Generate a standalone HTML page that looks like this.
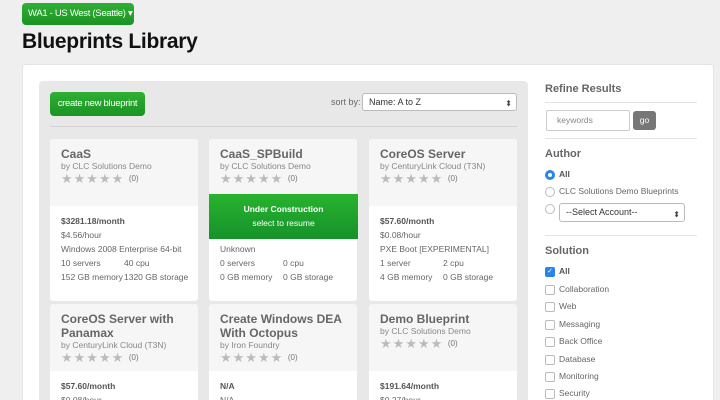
<!DOCTYPE html>
<html style="overflow:hidden;height:400px"><head><meta charset="utf-8"><style>
*{box-sizing:border-box;margin:0;padding:0}
body{width:720px;height:400px;overflow:hidden;background:#efefef;font-family:"Liberation Sans",sans-serif;position:relative;color:#555}
.abs{position:absolute}
.reg{left:22px;top:3px;width:112px;height:22px;background:linear-gradient(#2fb035,#1a9322);border-radius:4px;color:#fff;font-size:9.5px;line-height:22px;padding-left:6px;letter-spacing:-.3px;white-space:nowrap}
h1{position:absolute;left:22px;top:30px;font-size:21px;color:#111;font-weight:bold;letter-spacing:-.3px}
.panel{left:22px;top:64px;width:692px;height:336px;background:#fff;border-radius:4px 4px 0 0;border:1px solid #e4e4e4;border-bottom:none}
.inner{left:39px;top:81px;width:489px;height:319px;background:#e8e8e8;border-radius:4px 4px 0 0}
.btn{left:50px;top:92px;width:95px;height:24px;background:linear-gradient(#2fb035,#1a9322);border-radius:4px;color:#fff;font-size:9.5px;line-height:24px;text-align:center;letter-spacing:-.3px;white-space:nowrap}
.sortl{left:331px;top:97px;font-size:9px;color:#666}
.sel{background:#fff;border:1px solid #bbb;border-radius:3px;font-size:9px;color:#333;padding-left:6px}
.sel:after{content:"⬍";position:absolute;right:4px;top:2px;font-size:8px;color:#444}
.card{background:#fff;border-radius:3px;overflow:hidden}
.card .top{background:#f6f6f6;height:67px;padding:8px 11px}
.t{font-weight:bold;font-size:12px;color:#666;line-height:14px}
.by{font-size:8.5px;color:#888;margin-top:0px}
.st{font-size:13px;color:#bbb;letter-spacing:1px;line-height:16px}
.st span{font-size:8px;color:#777;letter-spacing:0;vertical-align:2px}
.bd{padding:8px 11px;font-size:8.5px;color:#666;line-height:14px;white-space:nowrap}
.bd b{color:#555}
.g{display:inline-block;width:63px}
.h{font-weight:bold;color:#666;font-size:11px}
.rule{height:1px;background:#e3e3e3;width:152px;left:545px}
.chk{width:10px;height:10px;border:1px solid #bbb;border-radius:2px;background:#fff;display:inline-block;vertical-align:middle;margin-right:4px}
.row{left:545px;font-size:8.5px;color:#666}
</style></head><body>
<div class="abs reg">WA1 - US West (Seattle) ▾</div>
<h1>Blueprints Library</h1>
<div class="abs panel"></div>
<div class="abs inner"></div>
<div class="abs btn">create new blueprint</div>
<div class="abs sortl">sort by:</div>
<div class="abs sel" style="left:362px;top:93px;width:155px;height:18px;line-height:16px">Name: A to Z</div>
<div class="abs" style="left:50px;top:126px;width:467px;height:1px;background:#d4d4d4"></div>

<div class="abs card" style="left:50px;top:139px;width:148px;height:162px"><div class="top"><div class="t">CaaS</div><div class="by">by CLC Solutions Demo</div><div class="st">★★★★★ <span>(0)</span></div></div>
<div class="bd"><b>$3281.18/month</b><br>$4.56/hour<br>Windows 2008 Enterprise 64-bit<br><span class="g">10 servers</span>40 cpu<br><span class="g">152 GB memory</span>1320 GB storage</div></div>

<div class="abs card" style="left:209px;top:139px;width:148px;height:162px"><div class="top"><div class="t">CaaS_SPBuild</div><div class="by">by CLC Solutions Demo</div><div class="st">★★★★★ <span>(0)</span></div></div>
<div class="bd" style="padding-top:36px">Unknown<br><span class="g">0 servers</span>0 cpu<br><span class="g">0 GB memory</span>0 GB storage</div></div>
<div class="abs" style="left:209px;top:194px;width:149px;height:45px;background:linear-gradient(#28b32e,#16922a);color:#fff;text-align:center;font-size:8.5px;line-height:14px;padding-top:8px"><b>Under Construction</b><br>select to resume</div>

<div class="abs card" style="left:369px;top:139px;width:148px;height:162px"><div class="top"><div class="t">CoreOS Server</div><div class="by">by CenturyLink Cloud (T3N)</div><div class="st">★★★★★ <span>(0)</span></div></div>
<div class="bd"><b>$57.60/month</b><br>$0.08/hour<br>PXE Boot [EXPERIMENTAL]<br><span class="g">1 server</span>2 cpu<br><span class="g">4 GB memory</span>0 GB storage</div></div>

<div class="abs card" style="left:50px;top:304px;width:148px;height:96px;border-radius:3px 3px 0 0"><div class="top"><div class="t">CoreOS Server with<br>Panamax</div><div class="by">by CenturyLink Cloud (T3N)</div><div class="st">★★★★★ <span>(0)</span></div></div>
<div class="bd"><b>$57.60/month</b><br>$0.08/hour</div></div>
<div class="abs card" style="left:209px;top:304px;width:148px;height:96px;border-radius:3px 3px 0 0"><div class="top"><div class="t">Create Windows DEA<br>With Octopus</div><div class="by">by Iron Foundry</div><div class="st">★★★★★ <span>(0)</span></div></div>
<div class="bd"><b>N/A</b><br>N/A</div></div>
<div class="abs card" style="left:369px;top:304px;width:148px;height:96px;border-radius:3px 3px 0 0"><div class="top"><div class="t">Demo Blueprint</div><div class="by">by CLC Solutions Demo</div><div class="st">★★★★★ <span>(0)</span></div></div>
<div class="bd"><b>$191.64/month</b><br>$0.27/hour</div></div>

<div class="abs h" style="left:545px;top:83px">Refine Results</div>
<div class="abs rule" style="top:102px"></div>
<div class="abs" style="left:546px;top:110px;width:84px;height:21px;border:1px solid #ccc;border-radius:2px;font-size:8.5px;color:#888;line-height:19px;padding-left:10px;background:#fff">keywords</div>
<div class="abs" style="left:633px;top:111px;width:23px;height:19px;background:#777;border-radius:3px;color:#fff;font-size:8.5px;line-height:19px;text-align:center">go</div>
<div class="abs rule" style="top:138px"></div>
<div class="abs h" style="left:545px;top:148px">Author</div>
<div class="abs row" style="top:169px"><span class="chk" style="border-radius:50%;border:3px solid #2b85e8"></span><b style="color:#555">All</b></div>
<div class="abs row" style="top:186px"><span class="chk" style="border-radius:50%"></span>CLC Solutions Demo Blueprints</div>
<div class="abs row" style="top:203px"><span class="chk" style="border-radius:50%"></span></div>
<div class="abs sel" style="left:559px;top:203px;width:126px;height:19px;line-height:17px;color:#333">--Select Account--</div>
<div class="abs rule" style="top:235px"></div>
<div class="abs h" style="left:545px;top:245px">Solution</div>
<div class="abs row" style="top:266px"><span class="chk" style="background:#2b85e8;border-color:#2b85e8;color:#fff;font-size:7px;line-height:8px;text-align:center">✓</span><b style="color:#555">All</b></div>
<div class="abs row" style="top:284px"><span class="chk"></span>Collaboration</div>
<div class="abs row" style="top:301px"><span class="chk"></span>Web</div>
<div class="abs row" style="top:319px"><span class="chk"></span>Messaging</div>
<div class="abs row" style="top:336px"><span class="chk"></span>Back Office</div>
<div class="abs row" style="top:354px"><span class="chk"></span>Database</div>
<div class="abs row" style="top:371px"><span class="chk"></span>Monitoring</div>
<div class="abs row" style="top:388px"><span class="chk"></span>Security</div>
</body></html>
